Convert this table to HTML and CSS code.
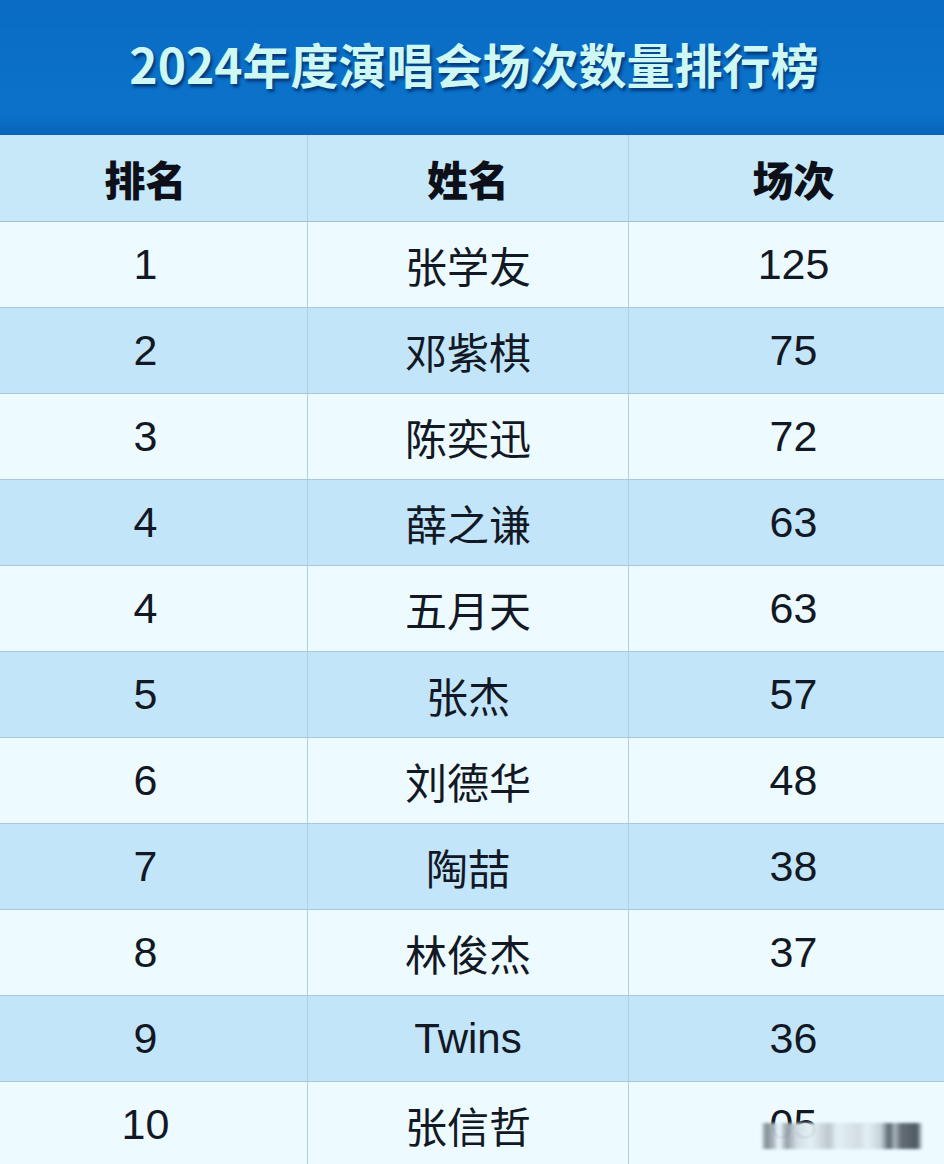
FILE: index.html
```html
<!DOCTYPE html>
<html lang="zh-CN">
<head>
<meta charset="utf-8">
<title>2024年度演唱会场次数量排行榜</title>
<link rel="stylesheet" href="styles.css">
</head>
<body>
<div class="board">
  <header class="title"><h1>2024年度演唱会场次数量排行榜</h1></header>
  <div class="table">
    <div class="row head">
      <div class="cell rank">排名</div>
      <div class="cell name">姓名</div>
      <div class="cell count">场次</div>
    </div>
    <div class="row light"><div class="cell rank num">1</div><div class="cell name">张学友</div><div class="cell count num">125</div></div>
    <div class="row blue"><div class="cell rank num">2</div><div class="cell name">邓紫棋</div><div class="cell count num">75</div></div>
    <div class="row light"><div class="cell rank num">3</div><div class="cell name">陈奕迅</div><div class="cell count num">72</div></div>
    <div class="row blue"><div class="cell rank num">4</div><div class="cell name">薛之谦</div><div class="cell count num">63</div></div>
    <div class="row light"><div class="cell rank num">4</div><div class="cell name">五月天</div><div class="cell count num">63</div></div>
    <div class="row blue"><div class="cell rank num">5</div><div class="cell name">张杰</div><div class="cell count num">57</div></div>
    <div class="row light"><div class="cell rank num">6</div><div class="cell name">刘德华</div><div class="cell count num">48</div></div>
    <div class="row blue"><div class="cell rank num">7</div><div class="cell name">陶喆</div><div class="cell count num">38</div></div>
    <div class="row light"><div class="cell rank num">8</div><div class="cell name">林俊杰</div><div class="cell count num">37</div></div>
    <div class="row blue"><div class="cell rank num">9</div><div class="cell name latin">Twins</div><div class="cell count num">36</div></div>
    <div class="row light"><div class="cell rank num">10</div><div class="cell name">张信哲</div><div class="cell count num smeared">05<span class="smear"></span></div></div>
  </div>
</div>
</body>
</html>
```
FILE: styles.css
```css
html, body {
  margin: 0;
  padding: 0;
}
body {
  width: 944px;
  height: 1164px;
  overflow: hidden;
  background: #ecfaff;
  font-family: "Noto Sans CJK SC", "Liberation Sans", sans-serif;
  color: #121824;
}
.board {
  display: flex;
  flex-direction: column;
}
.title {
  height: 135px;
  box-sizing: border-box;
  padding-bottom: 10px;
  background: linear-gradient(180deg, #0a6cc4 0%, #0b72ca 85%, #0964b8 100%);
  display: flex;
  align-items: center;
  justify-content: center;
}
.title h1 {
  margin: 0;
  font-size: 48px;
  font-weight: 700;
  line-height: 1;
  color: #cdf8f3;
  letter-spacing: 0;
  padding-left: 4px;
  text-shadow: 2px 3px 3px rgba(0, 28, 80, 0.65);
}
.table {
  display: flex;
  flex-direction: column;
}
.row {
  display: grid;
  grid-template-columns: 308px 321px 1fr;
  height: 86px;
  border-bottom: 1px solid #aac7da;
  box-sizing: border-box;
}
.row.head {
  height: 87px;
  background: #c7e8f9;
  border-bottom-color: #a3bfd2;
}
.row.light { background: #edfaff; }
.row.blue { background: #c3e5f9; }
.cell {
  display: flex;
  align-items: center;
  justify-content: center;
  font-size: 42px;
  line-height: 1;
}
.cell.rank {
  border-right: 1px solid #b3d0e2;
  padding-right: 16px;
}
.cell.name {
  border-right: 1px solid #b3d0e2;
}
.cell.count {
  padding-left: 14px;
}
.head .cell {
  font-size: 41px;
  font-weight: 900;
  color: #0d1018;
}
.num {
  font-family: "Liberation Sans", Arial, sans-serif;
  font-size: 43px;
}
.latin {
  font-family: "Liberation Sans", Arial, sans-serif;
  font-size: 42px;
}
.smeared {
  position: relative;
}
.smear {
  position: absolute;
  left: 112px;
  top: 41px;
  width: 182px;
  height: 26px;
  filter: blur(1.6px);
  background:
    linear-gradient(90deg,
      rgba(237,250,255,0) 0px,
      rgba(40,50,60,0.0) 20px,
      rgba(40,50,60,0.55) 25px,
      rgba(40,50,60,0.35) 32px,
      rgba(40,50,60,0.0) 38px,
      rgba(40,50,60,0.45) 46px,
      rgba(40,50,60,0.15) 56px,
      rgba(40,50,60,0.05) 70px,
      rgba(40,50,60,0.25) 88px,
      rgba(40,50,60,0.05) 96px,
      rgba(40,50,60,0.15) 118px,
      rgba(40,50,60,0.05) 126px,
      rgba(40,50,60,0.2) 140px,
      rgba(40,50,60,0.75) 148px,
      rgba(40,50,60,0.35) 154px,
      rgba(40,50,60,0.7) 160px,
      rgba(40,50,60,0.8) 176px,
      rgba(40,50,60,0) 182px),
    linear-gradient(90deg, rgba(237,250,255,0) 0px, rgba(237,250,255,0.96) 18px, rgba(237,250,255,0.96) 175px, rgba(237,250,255,0) 182px);
}
```
